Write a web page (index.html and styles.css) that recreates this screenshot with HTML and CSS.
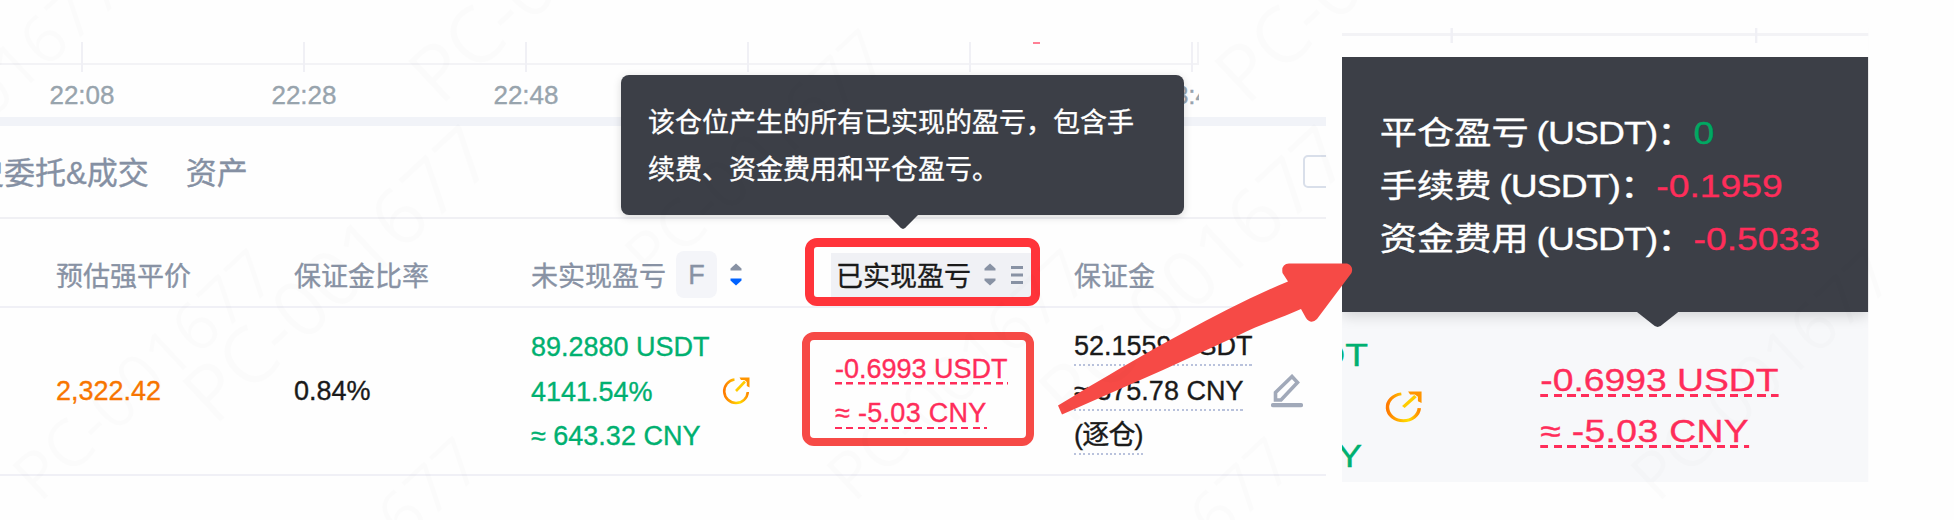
FILE: index.html
```html
<!DOCTYPE html>
<html lang="zh-CN">
<head>
    <meta charset="UTF-8">
    <meta name="viewport" content="width=device-width, initial-scale=1.0">
    <title>已实现盈亏</title>
    <link rel="stylesheet" href="styles.css">
</head>
<body>

<svg width="0" height="0" class="defs">
    <defs>
        <linearGradient id="gold" x1="0" y1="0" x2="1" y2="0">
            <stop offset="0" stop-color="#ff7a00"/>
            <stop offset="0.65" stop-color="#ffdf00"/>
            <stop offset="1" stop-color="#ff8a00"/>
        </linearGradient>
        <symbol id="share" viewBox="0 0 28 28">
            <path d="M12.500 2.500A11.800 11.800 0 1 0 25.800 15" fill="none" stroke="url(#gold)" stroke-width="2.600"/>
            <path d="M14 14L23 4.500" fill="none" stroke="#ffcc00" stroke-width="2.600"/>
            <path d="M17.500 .5H27.500V10.500L24.800 9V5L22.500 3H19Z" fill="#ff9500"/>
        </symbol>
        <symbol id="up" viewBox="0 0 12 8"><path d="M6 .5L11.500 5.500V7.500H.5V5.500Z" fill="#8892a4"/></symbol>
        <symbol id="down" viewBox="0 0 12 8"><path d="M6 7.500L11.500 2.500V.5H.5V2.500Z" fill="currentColor"/></symbol>
    </defs>
</svg>

<div class="page">
    <div class="panel">
        <div class="axis">
            <div class="tick"><i></i><span>22:08</span></div>
            <div class="tick"><i></i><span>22:28</span></div>
            <div class="tick"><i></i><span>22:48</span></div>
            <div class="tick"><i></i></div>
            <div class="tick"><i></i></div>
            <div class="tick"><i></i><span>23:48</span></div>
            <b class="candle"></b>
        </div>

        <div class="tabs">
            <span class="tab first">史委托&amp;成交</span>
            <span class="tab">资产</span>
            <span class="checkbox"></span>
        </div>

        <div class="row head">
            <div>预估强平价</div>
            <div>保证金比率</div>
            <div class="th">
                <span>未实现盈亏</span>
                <span class="badge">F</span>
                <span class="sort active">
                    <svg width="12" height="8"><use href="#up"/></svg>
                    <svg width="12" height="8"><use href="#down"/></svg>
                </span>
            </div>
            <div class="th hovered">
                <span>已实现盈亏</span>
                <span class="sort">
                    <svg width="12" height="8"><use href="#up"/></svg>
                    <svg width="12" height="8"><use href="#down"/></svg>
                </span>
                <svg class="menu" width="12" height="20" viewBox="0 0 12 20"><path d="M0 2.500H12M0 10H12M0 17.500H12" stroke="#8892a4" stroke-width="3"/></svg>
            </div>
            <div>保证金</div>
        </div>

        <div class="row data">
            <div class="orange">2,322.42</div>
            <div>0.84%</div>
            <div class="pnl green">
                <div>89.2880 USDT<br>4141.54%<br>≈ 643.32 CNY</div>
                <svg class="share" width="28" height="28"><use href="#share"/></svg>
            </div>
            <div class="realized"><span class="dash">-0.6993 USDT</span><span class="dash short">≈ -5.03 CNY</span></div>
            <div class="margin">
                <div class="lines">
                    <span class="dots">52.1559 USDT</span>
                    <span class="dots">≈ 375.78 CNY</span>
                    <span class="dots cjk">(逐仓)</span>
                </div>
                <svg class="pencil" width="32" height="34" viewBox="0 0 32 34" fill="none" stroke="#a1a9b9">
                    <path d="M4.500 26V18.500L21 2.500L26.500 8.500L10 26Z" stroke-width="3.600"/>
                    <path d="M2 31.200H30" stroke-width="4.200" stroke-linecap="round"/>
                </svg>
            </div>
        </div>

        <div class="tooltip">该仓位产生的所有已实现的盈亏，包含手续费、资金费用和平仓盈亏。</div>
    </div>

    <div class="detail">
        <div class="detail-axis"><i></i><i></i></div>
        <div class="detail-tip">
            <p>平仓盈亏<span class="unit"> (USDT)：</span><span class="up">0</span></p>
            <p>手续费<span class="unit"> (USDT)：</span><span class="loss">-0.1959</span></p>
            <p>资金费用<span class="unit"> (USDT)：</span><span class="loss">-0.5033</span></p>
        </div>
        <div class="detail-row">
            <div class="cut"><span>USDT</span><span>CNY</span></div>
            <svg class="share" width="32" height="32"><use href="#share"/></svg>
            <div class="realized"><span class="dash">-0.6993 USDT</span><span class="dash short">≈ -5.03 CNY</span></div>
        </div>
    </div>

    <!-- marks on top of the table -->
    <div class="mark mark-head"></div>
    <div class="mark mark-value"></div>
    <svg class="arrow" width="300" height="156" viewBox="1056 260 300 156">
        <path d="M1058 405.500C1100 380 1144 354 1183 333C1218 314 1253 296 1288 281.500L1282.500 273Q1281 264 1289 263.500H1347Q1354 266 1351.500 273L1317 319Q1311 325 1306 318L1301 309C1281 318 1259 325 1237 336L1163 370L1062 414.500Z" fill="#f64a46"/>
    </svg>

    <div class="watermarks">
        <span class="wm" style="left: -130px; top: 165px">PC-001677</span>
        <span class="wm" style="left: 22px; top: 452px">PC-001677</span>
        <span class="wm big" style="left: 194px; top: 372px">PC-001677</span>
        <span class="wm big" style="left: 420px; top: 52px">PC-001677</span>
        <span class="wm" style="left: 228px; top: 640px">PC-001677</span>
        <span class="wm" style="left: 634px; top: 232px">PC-001677</span>
        <span class="wm" style="left: 836px; top: 452px">PC-001677</span>
        <span class="wm big" style="left: 1050px; top: 372px">PC-001677</span>
        <span class="wm big" style="left: 1226px; top: 52px">PC-001677</span>
        <span class="wm" style="left: 1040px; top: 640px">PC-001677</span>
        <span class="wm" style="left: 1640px; top: 452px">PC-001677</span>
    </div>
</div>

</body>
</html>
```
FILE: styles.css
```css
* {
    box-sizing: border-box;
}
body {
    margin: 0;
    background-color: #fefefe;
    font-family: "Liberation Sans", "Noto Sans CJK SC", sans-serif;
    font-size: 27px;
    color: #1a1a1a;
    -webkit-text-stroke: 0.35px currentColor;
}
.defs {
    position: absolute;
}
.page {
    position: relative;
    display: flex;
    align-items: flex-start;
    gap: 16px;
    width: 1954px;
    height: 520px;
    overflow: hidden;
}
.panel {
    position: relative;
    width: 1326px;
    margin-top: 42px;
}

/* time axis */
.axis {
    position: relative;
    display: flex;
    width: 1199px;
    height: 75px;
    overflow: hidden;
    background: linear-gradient(#f3f3f6, #f3f3f6) 0 21px / 100% 2px no-repeat,
                linear-gradient(#f3f3f6, #f3f3f6) 100% 0 / 2px 22px no-repeat;
}
.tick {
    flex: 0 0 222px;
    display: flex;
    flex-direction: column;
    align-items: center;
    font-size: 26px;
    line-height: 30px;
    color: #98a4ad;
}
.tick:first-child {
    margin-left: -29px;
}
.tick i {
    width: 2px;
    height: 30px;
    margin-bottom: 8px;
    background-color: #f0f0f5;
}
.candle {
    position: absolute;
    left: 1033px;
    top: 0;
    width: 7px;
    height: 2px;
    background-color: #ff8095;
}

.tabs {
    display: flex;
    align-items: center;
    height: 102px;
    border-top: 9px solid #f1f3f8;
    border-bottom: 2px solid #f0f0f4;
    overflow: hidden;
    font-size: 31px;
    color: #8590a3;
}
.tab {
    padding-bottom: 3px;
}
.tab.first {
    margin-left: -27px;
    margin-right: 37px;
}
.checkbox {
    width: 34px;
    height: 33px;
    margin-left: auto;
    margin-right: -11px;
    border: 2px solid #d9dfea;
    border-radius: 5px;
}

/* positions table */
.row {
    display: grid;
    grid-template-columns: 238px 237px 304px 239px 1fr;
    align-items: center;
    padding-left: 56px;
    border-bottom: 2px solid #f0f0f6;
}
.head {
    height: 89px;
    padding-top: 24px;
    color: #8892a4;
}
.data {
    height: 168px;
}
.th {
    display: flex;
    align-items: center;
}
.badge {
    width: 41px;
    height: 47px;
    margin-left: 10px;
    border-radius: 8px;
    background-color: #f4f5f9;
    text-align: center;
    line-height: 49px;
}
.sort {
    display: flex;
    flex-direction: column;
    gap: 7px;
    margin-left: 13px;
    color: #8892a4;
}
.sort.active {
    color: #0062ff;
}
.hovered {
    width: 204px;
    height: 44px;
    margin-left: -4px;
    padding-left: 5px;
    background-color: #f0f1f5;
    color: #1a1a1a;
}
.menu {
    margin-left: 15px;
}
.orange {
    color: #f87600;
}
.green {
    color: #00b070;
}
.pnl {
    display: flex;
    align-items: center;
    line-height: 44.5px;
}
.pnl > div {
    padding-top: 2px;
}
.pnl .share {
    margin-left: 12px;
}
.realized {
    display: flex;
    flex-direction: column;
    align-items: flex-start;
    color: #ff2d5a;
}
.dash {
    height: 31px;
    margin-bottom: 13.5px;
    line-height: 31px;
    background: repeating-linear-gradient(90deg, currentColor 0 7px, transparent 7px 11.5px) 0 100% / 100% 2.5px no-repeat;
}
.dash.short {
    letter-spacing: 0.3px;
}
.data .realized {
    padding-top: 14px;
}
.margin {
    display: flex;
    align-items: center;
}
.lines {
    display: flex;
    flex-direction: column;
    align-items: flex-start;
    width: 197px;
    padding-top: 14px;
}
.dots {
    height: 35px;
    margin-bottom: 9.5px;
    line-height: 31px;
    background: repeating-linear-gradient(90deg, #b9c2dc 0 2px, transparent 2px 4.5px) 0 100% / 100% 2px no-repeat;
}
.dots.cjk {
    letter-spacing: -0.8px;
}

.tooltip {
    position: absolute;
    left: 621px;
    top: 33px;
    width: 563px;
    height: 140px;
    padding: 25px 40px 0 27px;
    border-radius: 8px;
    background-color: #3c3f47;
    box-shadow: 0 2px 8px rgba(0, 0, 0, 0.15);
    color: #fff;
    line-height: 47px;
}
.tooltip::after,
.detail-tip::after {
    content: "";
    position: absolute;
    left: 267px;
    top: 100%;
    width: 30px;
    height: 14px;
    background-color: #3c3f47;
    clip-path: polygon(0 0, 100% 0, 57% 93%, 50% 100%, 43% 93%);
}

/* enlarged view, stretched sideways */
.detail {
    position: relative;
    width: 446px;
    height: 454px;
    margin-top: 28px;
    background-color: #f7f8fa;
    transform: scaleX(1.18);
    transform-origin: 0 0;
    font-size: 31.6px;
}
.detail-axis {
    display: flex;
    gap: 256px;
    height: 29px;
    padding-left: 92px;
    background: linear-gradient(#f3f3f6, #f3f3f6) 0 5px / 100% 3px no-repeat, #fefefe;
}
.detail-axis i {
    width: 2px;
    height: 15px;
    background-color: #f0f0f5;
}
.detail-tip {
    position: relative;
    height: 255px;
    padding: 50px 0 0 32px;
    background-color: #3c3f47;
    box-shadow: 0 4px 12px rgba(0, 0, 0, 0.15);
    clip-path: inset(0 0 -30px 0);
    color: #fff;
    line-height: 53px;
}
.detail-tip::after {
    left: 250px;
    width: 35px;
    height: 15px;
}
.detail-tip p {
    margin: 0;
    white-space: nowrap;
}
.unit {
    letter-spacing: -0.8px;
    word-spacing: -1.5px;
}
.up {
    color: #00a862;
}
.loss {
    color: #ff2d5a;
}
.detail-row {
    display: flex;
    align-items: flex-start;
    height: 170px;
}
.cut {
    display: flex;
    flex-direction: column;
    align-items: flex-end;
    gap: 66px;
    width: 22px;
    padding-top: 26px;
    overflow: hidden;
    color: #00b070;
    line-height: 35px;
}
.cut span:last-child {
    margin-right: 5px;
}
.detail-row .share {
    margin: 79px 0 0 14px;
}
.detail-row .realized {
    margin: 49px 0 0 100px;
}
.detail-row .dash {
    height: 36px;
    line-height: 38px;
    margin-bottom: 14.5px;
    background-size: 100% 3px;
}

.mark {
    position: absolute;
    border: 8px solid #ff343a;
    border-radius: 12px;
}
.mark-head {
    left: 805px;
    top: 238px;
    width: 235px;
    height: 68px;
    border-width: 9px;
}
.mark-value {
    left: 802px;
    top: 332px;
    width: 232px;
    height: 114px;
    border-color: #f64a46;
}
.arrow {
    position: absolute;
    left: 1056px;
    top: 260px;
}

.watermarks {
    position: absolute;
    inset: 0;
    overflow: hidden;
    pointer-events: none;
}
.wm {
    position: absolute;
    font-family: "Open Sans", sans-serif;
    font-size: 66px;
    line-height: 66px;
    color: rgba(0, 0, 0, 0.01);
    -webkit-text-stroke: 0;
    transform: rotate(-43deg);
    transform-origin: 0 50%;
    white-space: nowrap;
}
.wm.big {
    font-size: 78px;
}
```
